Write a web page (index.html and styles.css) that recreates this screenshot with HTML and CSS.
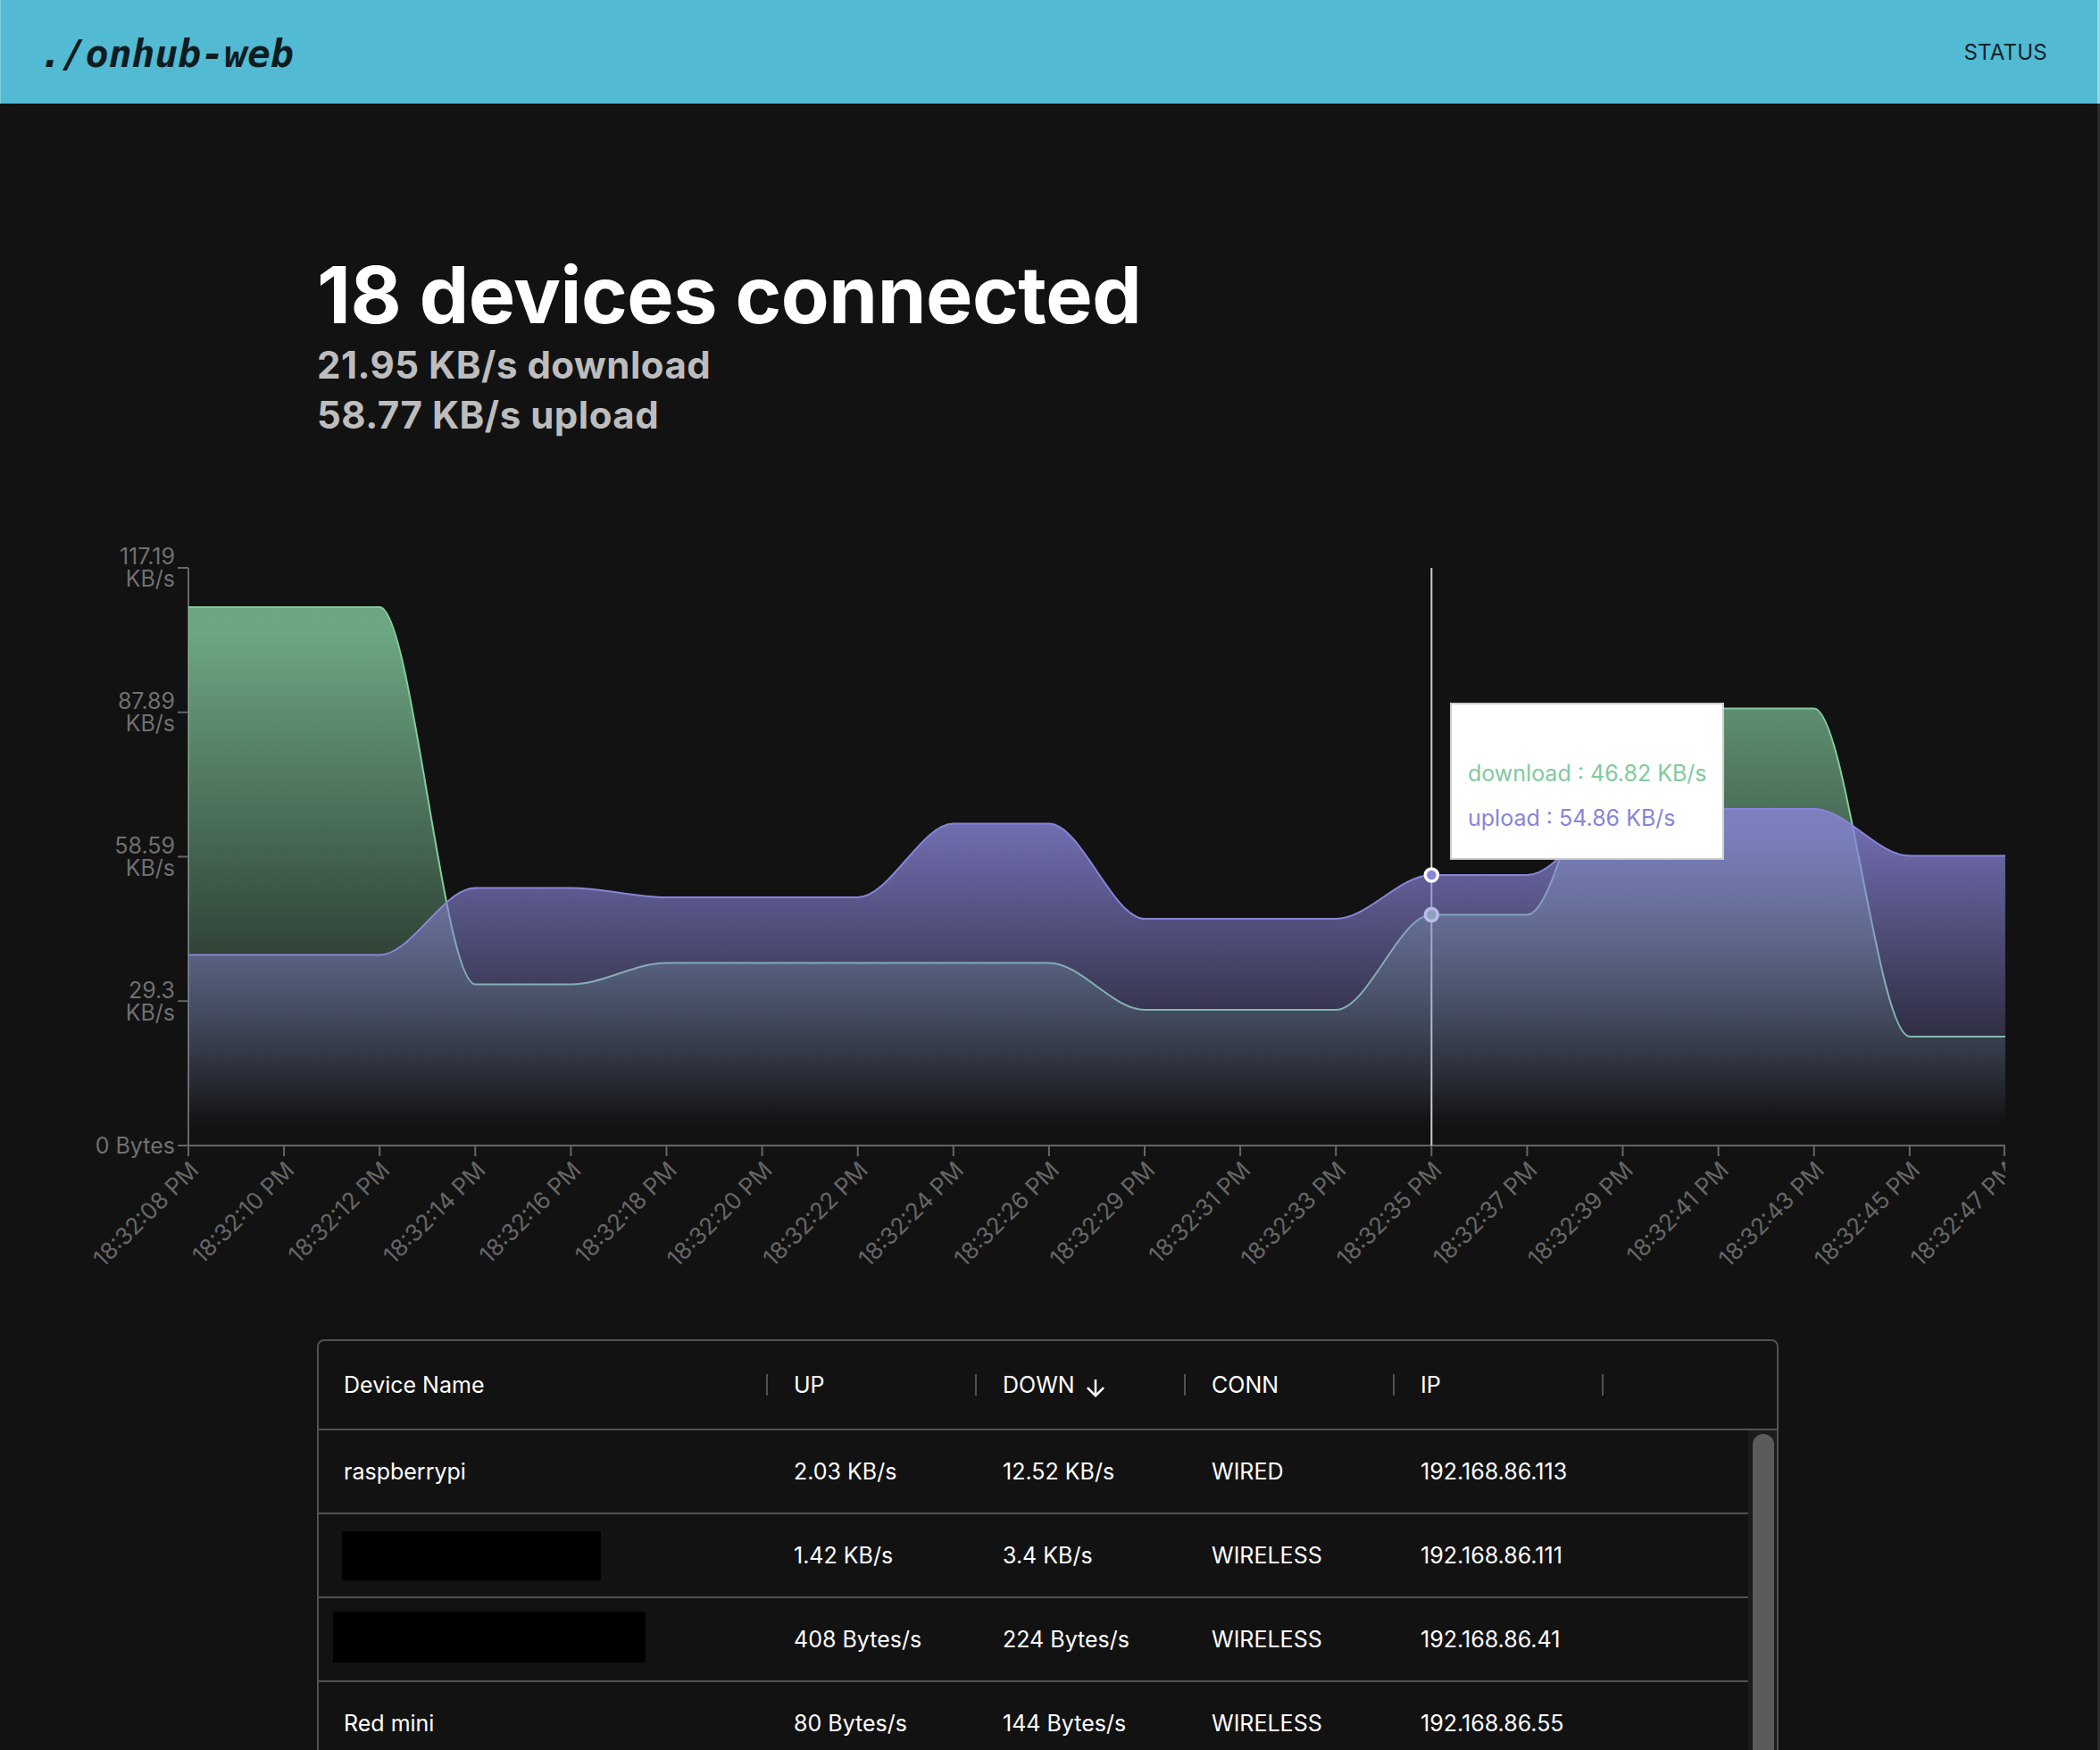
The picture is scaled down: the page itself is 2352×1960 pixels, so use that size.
FILE: index.html
```html
<!DOCTYPE html>
<html lang="en">
<head>
<meta charset="utf-8">
<title>onhub-web</title>
<link rel="stylesheet" href="styles.css">
</head>
<body>
<header class="topbar">
  <div class="logo">./onhub-web</div>
  <nav class="nav">STATUS</nav>
</header>
<main class="main">
  <section class="summary">
    <h1 class="title">18 devices connected</h1>
    <p class="rate">21.95 KB/s download</p>
    <p class="rate">58.77 KB/s upload</p>
  </section>

  <div class="chart">
    <svg class="chart-svg" width="2246" height="880" viewBox="0 560 2246 880" xmlns="http://www.w3.org/2000/svg">
      <defs>
        <linearGradient id="gDown" x1="0" y1="0" x2="0" y2="1">
          <stop offset="5%" stop-color="#82ca9d" stop-opacity="0.8"/>
          <stop offset="95%" stop-color="#82ca9d" stop-opacity="0"/>
        </linearGradient>
        <linearGradient id="gUp" x1="0" y1="0" x2="0" y2="1">
          <stop offset="5%" stop-color="#8884d8" stop-opacity="0.8"/>
          <stop offset="95%" stop-color="#8884d8" stop-opacity="0"/>
        </linearGradient>
      </defs>

      <!-- axes -->
      <g class="axis">
        <line x1="211" y1="636" x2="211" y2="1283"/>
        <line x1="199" y1="636" x2="211" y2="636"/>
        <line x1="199" y1="797.8" x2="211" y2="797.8"/>
        <line x1="199" y1="959.5" x2="211" y2="959.5"/>
        <line x1="199" y1="1121.2" x2="211" y2="1121.2"/>
        <line x1="199" y1="1283" x2="211" y2="1283"/>
        <line x1="211" y1="1283" x2="2245.9" y2="1283"/>
        <line x1="211" y1="1283" x2="211" y2="1295"/>
        <line x1="318.1" y1="1283" x2="318.1" y2="1295"/>
        <line x1="425.2" y1="1283" x2="425.2" y2="1295"/>
        <line x1="532.3" y1="1283" x2="532.3" y2="1295"/>
        <line x1="639.4" y1="1283" x2="639.4" y2="1295"/>
        <line x1="746.5" y1="1283" x2="746.5" y2="1295"/>
        <line x1="853.6" y1="1283" x2="853.6" y2="1295"/>
        <line x1="960.7" y1="1283" x2="960.7" y2="1295"/>
        <line x1="1067.8" y1="1283" x2="1067.8" y2="1295"/>
        <line x1="1174.9" y1="1283" x2="1174.9" y2="1295"/>
        <line x1="1282" y1="1283" x2="1282" y2="1295"/>
        <line x1="1389.1" y1="1283" x2="1389.1" y2="1295"/>
        <line x1="1496.2" y1="1283" x2="1496.2" y2="1295"/>
        <line x1="1603.3" y1="1283" x2="1603.3" y2="1295"/>
        <line x1="1710.4" y1="1283" x2="1710.4" y2="1295"/>
        <line x1="1817.5" y1="1283" x2="1817.5" y2="1295"/>
        <line x1="1924.6" y1="1283" x2="1924.6" y2="1295"/>
        <line x1="2031.7" y1="1283" x2="2031.7" y2="1295"/>
        <line x1="2138.8" y1="1283" x2="2138.8" y2="1295"/>
        <line x1="2244.9" y1="1283" x2="2244.9" y2="1295"/>
      </g>

      <g class="ytick">
        <text x="196" y="636"><tspan x="196" dy="-0.145em">117.19</tspan><tspan x="196" dy="1em">KB/s</tspan></text>
        <text x="196" y="797.8"><tspan x="196" dy="-0.145em">87.89</tspan><tspan x="196" dy="1em">KB/s</tspan></text>
        <text x="196" y="959.5"><tspan x="196" dy="-0.145em">58.59</tspan><tspan x="196" dy="1em">KB/s</tspan></text>
        <text x="196" y="1121.2"><tspan x="196" dy="-0.145em">29.3</tspan><tspan x="196" dy="1em">KB/s</tspan></text>
        <text x="196" y="1283" dy="0.355em">0 Bytes</text>
      </g>

      <g class="xtick">
        <text x="211" y="1299" dy="0.71em" transform="rotate(-45 211 1299)">18:32:08 PM</text>
        <text x="318.1" y="1299" dy="0.71em" transform="rotate(-45 318.1 1299)">18:32:10 PM</text>
        <text x="425.2" y="1299" dy="0.71em" transform="rotate(-45 425.2 1299)">18:32:12 PM</text>
        <text x="532.3" y="1299" dy="0.71em" transform="rotate(-45 532.3 1299)">18:32:14 PM</text>
        <text x="639.4" y="1299" dy="0.71em" transform="rotate(-45 639.4 1299)">18:32:16 PM</text>
        <text x="746.5" y="1299" dy="0.71em" transform="rotate(-45 746.5 1299)">18:32:18 PM</text>
        <text x="853.6" y="1299" dy="0.71em" transform="rotate(-45 853.6 1299)">18:32:20 PM</text>
        <text x="960.7" y="1299" dy="0.71em" transform="rotate(-45 960.7 1299)">18:32:22 PM</text>
        <text x="1067.8" y="1299" dy="0.71em" transform="rotate(-45 1067.8 1299)">18:32:24 PM</text>
        <text x="1174.9" y="1299" dy="0.71em" transform="rotate(-45 1174.9 1299)">18:32:26 PM</text>
        <text x="1282" y="1299" dy="0.71em" transform="rotate(-45 1282 1299)">18:32:29 PM</text>
        <text x="1389.1" y="1299" dy="0.71em" transform="rotate(-45 1389.1 1299)">18:32:31 PM</text>
        <text x="1496.2" y="1299" dy="0.71em" transform="rotate(-45 1496.2 1299)">18:32:33 PM</text>
        <text x="1603.3" y="1299" dy="0.71em" transform="rotate(-45 1603.3 1299)">18:32:35 PM</text>
        <text x="1710.4" y="1299" dy="0.71em" transform="rotate(-45 1710.4 1299)">18:32:37 PM</text>
        <text x="1817.5" y="1299" dy="0.71em" transform="rotate(-45 1817.5 1299)">18:32:39 PM</text>
        <text x="1924.6" y="1299" dy="0.71em" transform="rotate(-45 1924.6 1299)">18:32:41 PM</text>
        <text x="2031.7" y="1299" dy="0.71em" transform="rotate(-45 2031.7 1299)">18:32:43 PM</text>
        <text x="2138.8" y="1299" dy="0.71em" transform="rotate(-45 2138.8 1299)">18:32:45 PM</text>
        <text x="2245.9" y="1299" dy="0.71em" transform="rotate(-45 2245.9 1299)">18:32:47 PM</text>
      </g>

      <!-- tooltip cursor -->
      <line class="cursor" x1="1603.3" y1="636" x2="1603.3" y2="1283"/>

      <!-- download area -->
      <path class="fill-down" d="M211,680 L425.2,680 C460.9,680 496.6,1102.5 532.3,1102.5 L639.4,1102.5 C675.1,1102.5 710.8,1078.5 746.5,1078.5 L1174.9,1078.5 C1210.6,1078.5 1246.3,1131 1282,1131 L1496.2,1131 C1531.9,1131 1567.6,1024.5 1603.3,1024.5 L1710.4,1024.5 C1746.1,1024.5 1781.8,793.5 1817.5,793.5 L2031.7,793.5 C2067.4,793.5 2103.1,1161 2138.8,1161 L2245.9,1161 L2245.9,1283 L211,1283 Z"/>
      <path class="line-down" d="M211,680 L425.2,680 C460.9,680 496.6,1102.5 532.3,1102.5 L639.4,1102.5 C675.1,1102.5 710.8,1078.5 746.5,1078.5 L1174.9,1078.5 C1210.6,1078.5 1246.3,1131 1282,1131 L1496.2,1131 C1531.9,1131 1567.6,1024.5 1603.3,1024.5 L1710.4,1024.5 C1746.1,1024.5 1781.8,793.5 1817.5,793.5 L2031.7,793.5 C2067.4,793.5 2103.1,1161 2138.8,1161 L2245.9,1161"/>
      <circle class="dot-down" cx="1603.3" cy="1024.5" r="7"/>

      <!-- upload area -->
      <path class="fill-up" d="M211,1069.5 L425.2,1069.5 C460.9,1069.5 496.6,994.5 532.3,994.5 L639.4,994.5 C675.1,994.5 710.8,1005 746.5,1005 L960.7,1005 C996.4,1005 1032.1,922.5 1067.8,922.5 L1174.9,922.5 C1210.6,922.5 1246.3,1029 1282,1029 L1496.2,1029 C1531.9,1029 1567.6,980 1603.3,980 L1710.4,980 C1746.1,980 1781.8,906 1817.5,906 L2031.7,906 C2067.4,906 2103.1,958.5 2138.8,958.5 L2245.9,958.5 L2245.9,1283 L211,1283 Z"/>
      <path class="line-up" d="M211,1069.5 L425.2,1069.5 C460.9,1069.5 496.6,994.5 532.3,994.5 L639.4,994.5 C675.1,994.5 710.8,1005 746.5,1005 L960.7,1005 C996.4,1005 1032.1,922.5 1067.8,922.5 L1174.9,922.5 C1210.6,922.5 1246.3,1029 1282,1029 L1496.2,1029 C1531.9,1029 1567.6,980 1603.3,980 L1710.4,980 C1746.1,980 1781.8,906 1817.5,906 L2031.7,906 C2067.4,906 2103.1,958.5 2138.8,958.5 L2245.9,958.5"/>
      <circle class="dot-up" cx="1603.3" cy="980" r="7"/>
    </svg>

    <div class="tooltip">
      <p class="tt-label">&nbsp;</p>
      <ul class="tt-list">
        <li class="tt-item tt-down">download : 46.82 KB/s</li>
        <li class="tt-item tt-up">upload : 54.86 KB/s</li>
      </ul>
    </div>
  </div>

  <div class="grid">
    <div class="grid-head">
      <div class="hcell c-name"><span class="htitle">Device Name</span><span class="sep"></span></div>
      <div class="hcell c-col"><span class="htitle">UP</span><span class="sep"></span></div>
      <div class="hcell c-col"><span class="htitle">DOWN</span><svg class="sort-icon" viewBox="0 0 24 24" xmlns="http://www.w3.org/2000/svg"><path d="M20 12l-1.41-1.41L13 16.17V4h-2v12.17l-5.58-5.59L4 12l8 8 8-8z"/></svg><span class="sep"></span></div>
      <div class="hcell c-col"><span class="htitle">CONN</span><span class="sep"></span></div>
      <div class="hcell c-col"><span class="htitle">IP</span><span class="sep"></span></div>
    </div>
    <div class="grid-body">
      <div class="rows">
        <div class="row">
          <div class="cell c-name">raspberrypi</div>
          <div class="cell c-col">2.03 KB/s</div>
          <div class="cell c-col">12.52 KB/s</div>
          <div class="cell c-col">WIRED</div>
          <div class="cell c-col">192.168.86.113</div>
        </div>
        <div class="row">
          <div class="cell c-name"><span class="redact redact-a"></span></div>
          <div class="cell c-col">1.42 KB/s</div>
          <div class="cell c-col">3.4 KB/s</div>
          <div class="cell c-col">WIRELESS</div>
          <div class="cell c-col">192.168.86.111</div>
        </div>
        <div class="row">
          <div class="cell c-name"><span class="redact redact-b"></span></div>
          <div class="cell c-col">408 Bytes/s</div>
          <div class="cell c-col">224 Bytes/s</div>
          <div class="cell c-col">WIRELESS</div>
          <div class="cell c-col">192.168.86.41</div>
        </div>
        <div class="row">
          <div class="cell c-name">Red mini</div>
          <div class="cell c-col">80 Bytes/s</div>
          <div class="cell c-col">144 Bytes/s</div>
          <div class="cell c-col">WIRELESS</div>
          <div class="cell c-col">192.168.86.55</div>
        </div>
      </div>
      <div class="scrollbar"><div class="thumb"></div></div>
    </div>
  </div>
</main>
</body>
</html>
```

FILE: styles.css
```css
* { box-sizing: border-box; }

html, body {
  margin: 0;
  padding: 0;
  overflow: hidden;
  background: #121212;
}

body {
  font-family: Inter, "Noto Sans", sans-serif;
  color: #ffffff;
  width: 2352px;
  height: 1960px;
}

/* ---------- top bar ---------- */
.topbar {
  height: 116px;
  display: flex;
  align-items: center;
  justify-content: space-between;
  background: #52bad2;
  padding: 0 56px 0 43px;
  border-left: 1px solid #86cde0;
  border-right: 3px solid #9fd6e4;
}

.logo {
  font-family: "DejaVu Sans Mono", "Liberation Mono", monospace;
  font-weight: 700;
  font-style: italic;
  font-size: 43px;
  line-height: 43px;
  color: #0e1c21;
  margin-top: 5px;
}

.nav {
  font-size: 24px;
  line-height: 29px;
  color: #10242a;
  letter-spacing: 0.01em;
}

/* ---------- main ---------- */
.main {
  border-right: 3px solid #2b2b2b;
  min-height: 1844px;
}

.summary {
  width: 1636px;
  margin-left: 355px;
  padding-top: 170px;
}

.title {
  margin: 0;
  font-size: 88px;
  line-height: 88px;
  font-weight: 700;
  color: #ffffff;
  letter-spacing: -0.005em;
}

.rate {
  margin: 0;
  font-size: 42px;
  line-height: 55px;
  font-weight: 700;
  color: #bdbdbd;
  letter-spacing: 0.5px;
}

.title + .rate { margin-top: 7px; }
.rate + .rate { margin-top: 1px; }

/* ---------- chart ---------- */
.chart {
  position: relative;
  width: 2246px;
  height: 880px;
  margin-top: 68px;
}

.chart-svg {
  display: block;
  font-family: Inter, "Noto Sans", sans-serif;
}

.axis line {
  stroke: #666666;
  stroke-width: 2;
}

.ytick text {
  font-size: 25px;
  fill: #707070;
  text-anchor: end;
}

.xtick text {
  font-size: 26px;
  fill: #666666;
  text-anchor: end;
}

.cursor {
  stroke: #cccccc;
  stroke-width: 2;
}

.fill-down { fill: url(#gDown); stroke: none; }
.line-down { fill: none; stroke: #82ca9d; stroke-width: 2; }
.fill-up { fill: url(#gUp); stroke: none; }
.line-up { fill: none; stroke: #8884d8; stroke-width: 2; }

.dot-down { fill: #82ca9d; stroke: #ffffff; stroke-width: 3.5; }
.dot-up { fill: #8884d8; stroke: #ffffff; stroke-width: 3.5; }

.tooltip {
  position: absolute;
  left: 1624px;
  top: 227px;
  background: #ffffff;
  border: 2px solid #cccccc;
  padding: 20px 17px 20px 18px;
  white-space: nowrap;
  font-size: 25px;
}

.tt-label {
  margin: 0;
  height: 32px;
  line-height: 32px;
}

.tt-list {
  margin: 0;
  padding: 0;
  list-style: none;
}

.tt-item {
  padding: 8px 0;
  line-height: 34px;
}

.tt-down { color: #82ca9d; }
.tt-up { color: #8884d8; }

/* ---------- data grid ---------- */
.grid {
  width: 1637px;
  margin: 60px 0 0 355px;
  border: 2px solid #515151;
  border-radius: 8px;
  overflow: hidden;
  font-size: 25px;
}

.grid-head {
  display: flex;
  height: 100px;
  border-bottom: 2px solid #515151;
}

.hcell {
  display: flex;
  align-items: center;
  font-weight: 400;
  color: #ffffff;
}

.htitle { white-space: nowrap; }

.sep {
  margin-left: auto;
  margin-right: -1px;
  width: 2px;
  height: 24px;
  background: #515151;
}

.sort-icon {
  width: 30px;
  height: 30px;
  margin-left: 8px;
  margin-top: 8px;
  fill: #ffffff;
}

.c-name {
  width: 502px;
  padding-left: 28px;
  flex: none;
}

.c-col {
  width: 234px;
  padding-left: 30px;
  flex: none;
}

.grid-body {
  display: flex;
  height: 600px;
}

.rows {
  flex: 1;
}

.row {
  display: flex;
  height: 94px;
  border-bottom: 2px solid #515151;
}

.cell {
  display: flex;
  align-items: center;
  white-space: nowrap;
  color: #ffffff;
}

.redact {
  display: block;
  background: #000000;
}

.redact-a {
  width: 290px;
  height: 55px;
  margin-left: -2px;
}

.redact-b {
  width: 350px;
  height: 57px;
  margin-left: -12px;
  margin-top: -6px;
}

.scrollbar {
  width: 32px;
  flex: none;
  background: #1c1c1c;
  padding: 4px 3px 0 5px;
}

.thumb {
  width: 24px;
  height: 480px;
  border-radius: 12px;
  background: #5b5b5b;
}
```
